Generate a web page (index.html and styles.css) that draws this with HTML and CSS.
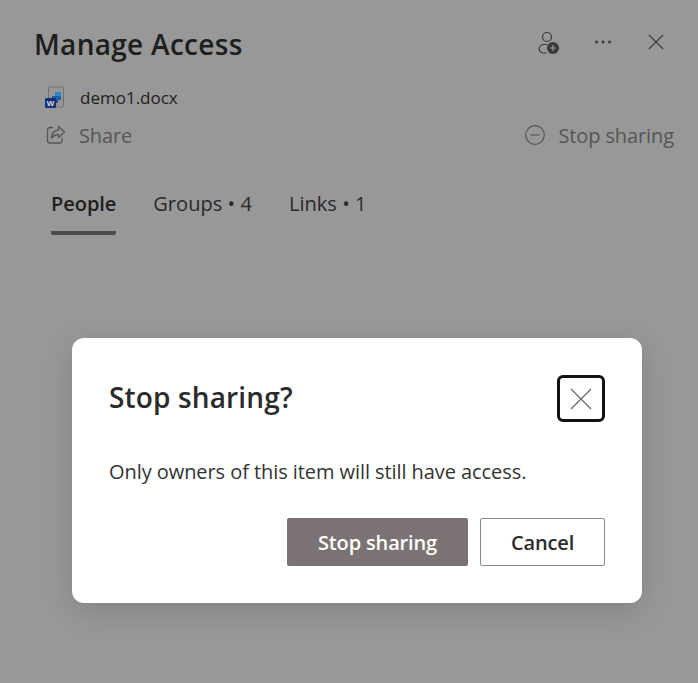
FILE: index.html
```html
<!DOCTYPE html>
<html lang="en">
<head>
  <meta charset="UTF-8">
  <title>Manage Access</title>
  <link rel="stylesheet" href="styles.css">
</head>
<body>
  <div class="panel">
    <div class="panel-header">
      <h1>Manage Access</h1>
      <div class="header-actions">
        <svg class="icon-person" width="24" height="24" viewBox="0 0 24 24" fill="none" stroke="#3a3a3a" stroke-width="1.2">
          <circle cx="10" cy="7" r="4.500"/>
          <path d="M9.500 23H6.500C3.800 23 2.200 21.200 2.200 19 2.200 16.500 4 14.500 6.500 14.500H10.500"/>
          <circle cx="16" cy="18" r="6" fill="#3a3a3a" stroke="none"/>
          <path d="M16 15v6M13 18h6" stroke="#a0a0a0" stroke-width="1.2"/>
        </svg>
        <svg class="icon-more" width="20" height="20" viewBox="0 0 20 20" fill="#3a3a3a">
          <circle cx="3.5" cy="10" r="1.5"/>
          <circle cx="10" cy="10" r="1.5"/>
          <circle cx="16.5" cy="10" r="1.5"/>
        </svg>
        <svg class="icon-close" width="16" height="16" viewBox="0 0 16 16" stroke="#3a3a3a" stroke-width="1.1">
          <path d="M1 1l14 14M15 1L1 15"/>
        </svg>
      </div>
    </div>

    <div class="file-row">
      <svg width="20" height="22" viewBox="0 0 20 22">
        <path d="M3.500 12V2.500A1.500 1.500 0 0 1 5 1h12a1.500 1.500 0 0 1 1.500 1.500v17a1.500 1.500 0 0 1-1.500 1.500H11" fill="#969696" stroke="#6f6f6f"/>
        <rect x="10" y="6" width="6" height="4" fill="#2a86c8"/>
        <rect x="7" y="10" width="9" height="4" fill="#1c5fa6"/>
        <rect x="7" y="14" width="6" height="3" fill="#1d4a80"/>
        <rect x="0" y="12" width="11" height="10" rx="1" fill="#15307a"/>
        <text x="5.500" y="20" class="word-letter">W</text>
      </svg>
      <span>demo1.docx</span>
    </div>

    <div class="action-row">
      <div class="action">
        <svg width="20" height="20" viewBox="0 0 20 20" fill="none" stroke="#555" stroke-width="1.300">
          <path d="M7 2.500H4a2.500 2.500 0 0 0-2.500 2.500v10.500A2.500 2.500 0 0 0 4 18h9.500a2.500 2.500 0 0 0 2.500-2.500V13"/>
          <path d="M12.500 1.500l6 5.500-6 5.500V9.500c-3.500 0-5.500 1.200-7 4 0-5 2.500-8 7-8.500z" stroke-linejoin="round"/>
        </svg>
        <span>Share</span>
      </div>
      <div class="action">
        <svg width="20" height="20" viewBox="0 0 20 20" fill="none" stroke="#555" stroke-width="1.200">
          <circle cx="10" cy="10" r="9.300"/>
          <path d="M5.500 10h9"/>
        </svg>
        <span>Stop sharing</span>
      </div>
    </div>

    <div class="tabs">
      <div class="tab active">People</div>
      <div class="tab">Groups • 4</div>
      <div class="tab">Links • 1</div>
    </div>
  </div>

  <div class="overlay">
    <div class="dialog">
      <div class="dialog-title">
        <h2>Stop sharing?</h2>
        <button class="dialog-close">
          <svg width="22" height="22" viewBox="0 0 22 22" stroke="#666" stroke-width="1.200">
            <path d="M1 1l20 20M21 1L1 21"/>
          </svg>
        </button>
      </div>
      <p>Only owners of this item will still have access.</p>
      <div class="dialog-buttons">
        <button class="btn primary">Stop sharing</button>
        <button class="btn">Cancel</button>
      </div>
    </div>
  </div>
</body>
</html>
```

FILE: styles.css
```css
body {
  font-family: 'Open Sans', 'Noto Sans', sans-serif;
  margin: 0;
  background: #989898;
  color: #1f1f1f;
  width: 698px;
  height: 683px;
  overflow: hidden;
  position: relative;
}

.panel {
  padding: 26px 24px 0 34px;
}

.panel-header {
  display: flex;
  justify-content: space-between;
  align-items: center;
  height: 36px;
}

h1 {
  margin: 0;
  font-size: 28px;
  font-weight: 600;
  letter-spacing: 0.3px;
  color: #1e1e1e;
  line-height: 36px;
}

.header-actions {
  display: flex;
  align-items: center;
  margin-top: -4px;
  margin-right: 10px;
}

.icon-person {
  margin-right: 32px;
}

.icon-more {
  margin-right: 35px;
}

.file-row {
  display: flex;
  align-items: center;
  gap: 15px;
  margin: 23px 0 0 11px;
  height: 24px;
  font-size: 17px;
  color: #222;
}

.word-letter {
  font-family: 'Liberation Sans', sans-serif;
  font-size: 8px;
  font-weight: 700;
  fill: #d8d8d8;
  text-anchor: middle;
}

.action-row {
  display: flex;
  justify-content: space-between;
  margin: 12px 0 0 12px;
  height: 28px;
  align-items: center;
  font-size: 20px;
  letter-spacing: -0.1px;
  color: #555;
}

.action {
  display: flex;
  align-items: center;
  gap: 13px;
}

.tabs {
  display: flex;
  gap: 37px;
  margin: 40px 0 0 17px;
  font-size: 20px;
  letter-spacing: 0.05px;
  color: #2a2a2a;
}

.tab {
  height: 42px;
  line-height: 30px;
}

.tab.active {
  font-weight: 600;
  letter-spacing: -0.05px;
  color: #1e1e1e;
  border-bottom: 4px solid #4a4a4a;
  border-radius: 0 0 2px 2px;
}

.overlay {
  position: absolute;
  left: 72px;
  top: 338px;
}

.dialog {
  width: 570px;
  height: 265px;
  box-sizing: border-box;
  padding: 37px 37px 0;
  background: white;
  border-radius: 12px;
  box-shadow: 0 8px 32px rgba(0, 0, 0, 0.14);
  color: #242424;
}

.dialog-title {
  display: flex;
  justify-content: space-between;
  align-items: center;
}

h2 {
  margin: 0 0 3px;
  font-size: 28px;
  font-weight: 600;
  letter-spacing: 0.15px;
  color: #2b2b2b;
  line-height: 36px;
}

.dialog-close {
  width: 48px;
  height: 47px;
  padding: 0;
  display: flex;
  align-items: center;
  justify-content: center;
  background: white;
  border: 3px solid #111;
  border-radius: 6px;
}

p {
  margin: 37px 0 0;
  font-size: 20px;
  letter-spacing: -0.07px;
  line-height: 26px;
  color: #333;
}

.dialog-buttons {
  display: flex;
  justify-content: flex-end;
  gap: 12px;
  margin-top: 33px;
}

.btn {
  height: 48px;
  width: 125px;
  font-family: inherit;
  font-size: 20px;
  font-weight: 600;
  letter-spacing: -0.15px;
  color: #2b2b2b;
  background: white;
  border: 1px solid #8a8a8a;
  border-radius: 2px;
}

.btn.primary {
  width: 181px;
  background: #7b7373;
  border: none;
  color: white;
}
```
